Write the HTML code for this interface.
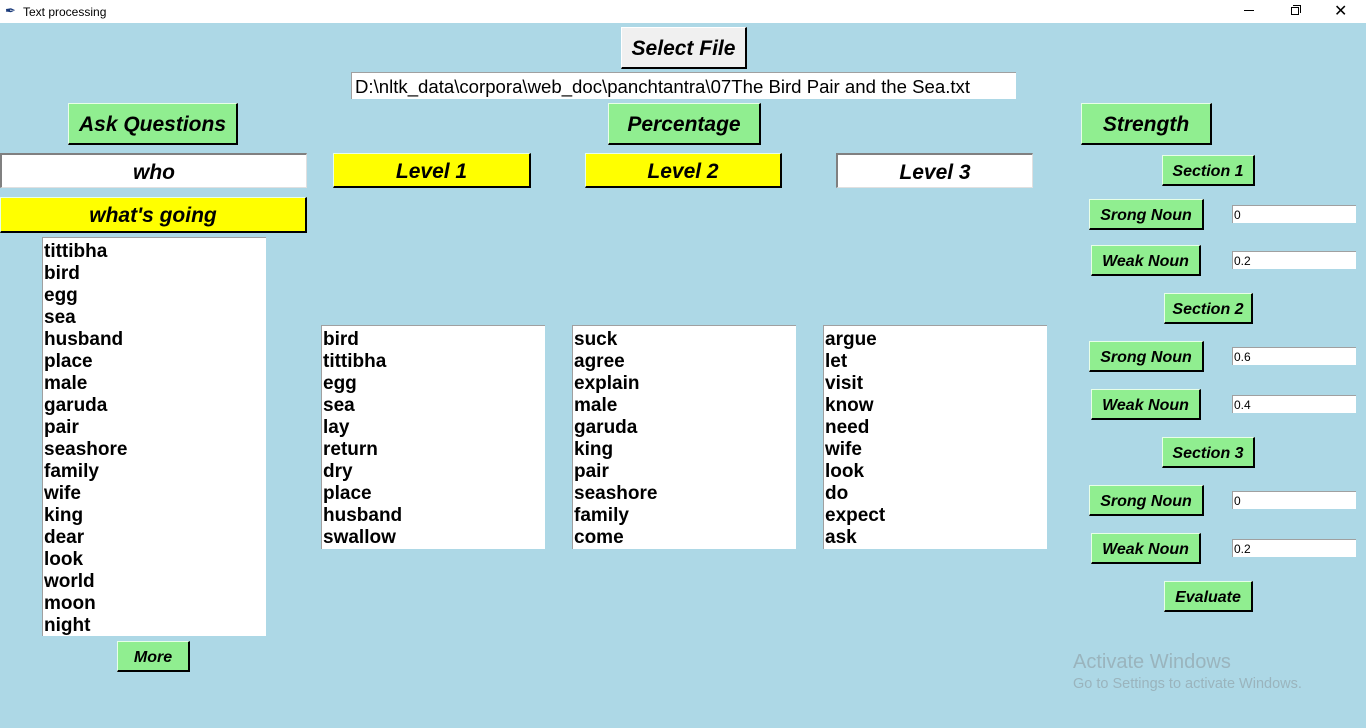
<!DOCTYPE html>
<html><head><meta charset="utf-8"><style>
*{margin:0;padding:0;box-sizing:border-box}
body{width:1366px;height:728px;background:#add8e6;position:relative;overflow:hidden;font-family:"Liberation Sans",Arial,sans-serif}
.a{position:absolute}
.btn{position:absolute;display:flex;align-items:center;justify-content:center;padding-top:3px;font-weight:bold;font-style:italic;color:#000;border-top:1px solid #e8ffe8;border-left:1px solid #e8ffe8;border-right:2px solid #000;border-bottom:2px solid #000}
.g{background:#90ee90}
.y{background:#ffff00}
.w{background:#fff;border-top:2px solid #808080;border-left:2px solid #808080;border-right:1px solid #e0e0e0;border-bottom:1px solid #e0e0e0}
.b20{font-size:21px}.b15{font-size:16px}
.list{position:absolute;background:#fff;border-top:1px solid #a0a0a0;border-left:1px solid #a0a0a0;font-weight:bold;font-size:19px;line-height:22px;padding-left:1px;padding-top:3px;color:#000}
.ent{position:absolute;background:#fff;border-top:1px solid #a0a0a0;border-left:1px solid #a0a0a0;font-size:12px;line-height:18px;padding-left:1px}
</style></head><body>
<div class="a" style="left:0;top:0;width:1366px;height:23px;background:#fff"></div>
<div class="a" style="left:5px;top:3px;font-size:13px;color:#1a3a7a">&#x2712;</div>
<div class="a" style="left:23px;top:5px;font-size:12px">Text processing</div>
<div class="a" style="left:1244px;top:10px;width:10px;height:1px;background:#000"></div>
<div class="a" style="left:1291px;top:7px;width:8px;height:8px;border:1px solid #000"></div>
<div class="a" style="left:1293px;top:5px;width:8px;height:8px;border-top:1px solid #000;border-right:1px solid #000"></div>
<div class="a" style="left:1334px;top:1px;font-size:16px">&#x2715;</div>

<div class="btn b20" style="left:621px;top:27px;width:126px;height:42px;background:#f0f0f0;border-top-color:#fff;border-left-color:#fff">Select File</div>
<div class="a" style="left:351px;top:72px;width:665px;height:27px;background:#fff;border-top:1px solid #a0a0a0;border-left:1px solid #a0a0a0;font-size:18.6px;line-height:28px;padding-left:3px">D:\nltk_data\corpora\web_doc\panchtantra\07The Bird Pair and the Sea.txt</div>

<div class="btn g b20" style="left:68px;top:103px;width:170px;height:42px">Ask Questions</div>
<div class="btn g b20" style="left:608px;top:103px;width:153px;height:42px">Percentage</div>
<div class="btn g b20" style="left:1081px;top:103px;width:131px;height:42px">Strength</div>

<div class="btn w b20" style="left:0;top:153px;width:307px;height:35px">who</div>
<div class="btn y b20" style="left:333px;top:153px;width:198px;height:35px">Level 1</div>
<div class="btn y b20" style="left:585px;top:153px;width:197px;height:35px">Level 2</div>
<div class="btn w b20" style="left:836px;top:153px;width:197px;height:35px">Level 3</div>
<div class="btn y b20" style="left:0;top:197px;width:307px;height:36px">what's going</div>

<div class="list" style="left:42px;top:237px;width:224px;height:399px">tittibha<br>bird<br>egg<br>sea<br>husband<br>place<br>male<br>garuda<br>pair<br>seashore<br>family<br>wife<br>king<br>dear<br>look<br>world<br>moon<br>night</div>
<div class="btn g b15" style="left:117px;top:641px;width:73px;height:31px">More</div>

<div class="list" style="left:321px;top:325px;width:224px;height:224px">bird<br>tittibha<br>egg<br>sea<br>lay<br>return<br>dry<br>place<br>husband<br>swallow</div>
<div class="list" style="left:572px;top:325px;width:224px;height:224px">suck<br>agree<br>explain<br>male<br>garuda<br>king<br>pair<br>seashore<br>family<br>come</div>
<div class="list" style="left:823px;top:325px;width:224px;height:224px">argue<br>let<br>visit<br>know<br>need<br>wife<br>look<br>do<br>expect<br>ask</div>

<div class="btn g b15" style="left:1162px;top:155px;width:93px;height:31px">Section 1</div>
<div class="btn g b15" style="left:1089px;top:199px;width:115px;height:31px">Srong Noun</div>
<div class="ent" style="left:1232px;top:205px;width:124px;height:18px">0</div>
<div class="btn g b15" style="left:1091px;top:245px;width:110px;height:31px">Weak Noun</div>
<div class="ent" style="left:1232px;top:251px;width:124px;height:18px">0.2</div>

<div class="btn g b15" style="left:1164px;top:293px;width:89px;height:31px">Section 2</div>
<div class="btn g b15" style="left:1089px;top:341px;width:115px;height:31px">Srong Noun</div>
<div class="ent" style="left:1232px;top:347px;width:124px;height:18px">0.6</div>
<div class="btn g b15" style="left:1091px;top:389px;width:110px;height:31px">Weak Noun</div>
<div class="ent" style="left:1232px;top:395px;width:124px;height:18px">0.4</div>

<div class="btn g b15" style="left:1162px;top:437px;width:93px;height:31px">Section 3</div>
<div class="btn g b15" style="left:1089px;top:485px;width:115px;height:31px">Srong Noun</div>
<div class="ent" style="left:1232px;top:491px;width:124px;height:18px">0</div>
<div class="btn g b15" style="left:1091px;top:533px;width:110px;height:31px">Weak Noun</div>
<div class="ent" style="left:1232px;top:539px;width:124px;height:18px">0.2</div>

<div class="btn g b15" style="left:1164px;top:581px;width:89px;height:31px">Evaluate</div>

<div class="a" style="left:1073px;top:651px;font-size:20px;color:#9ab4bd">Activate Windows</div>
<div class="a" style="left:1073px;top:676px;font-size:14.5px;color:#9ab4bd">Go to Settings to activate Windows.</div>
</body></html>
